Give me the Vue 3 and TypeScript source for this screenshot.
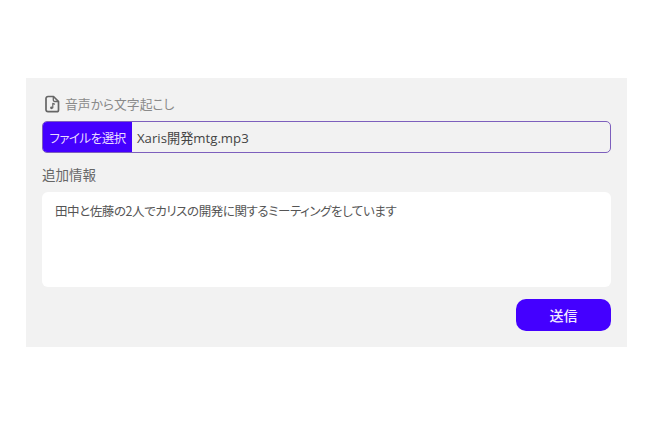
<script setup lang="ts">
const fileName: string = 'Xaris開発mtg.mp3'
const context: string = '田中と佐藤の2人でカリスの開発に関するミーティングをしています'
</script>

<template>
  <div class="page">
    <form class="panel" @submit.prevent>
      <div class="title">
        <svg class="icon" viewBox="0 0 16 18" width="16" height="18" fill="none" stroke="#666" stroke-width="1.700" stroke-linejoin="round" stroke-linecap="round">
          <path d="M4 1.500h5.500l5 5v8.500a1.700 1.700 0 0 1-1.700 1.700h-8.800a2 2 0 0 1-2-1.700v-11.500a2 2 0 0 1 2-2z" />
          <path d="M9.300 1.800v3.200a1.500 1.500 0 0 0 1.500 1.500h3.400" stroke-width="1.300" />
          <path d="M8.800 12.700v-4.300l1.700 .7" stroke-width="1.200" />
          <circle cx="7.500" cy="12.800" r="1.400" fill="#666" stroke="none" />
        </svg>
        <span>音声から文字起こし</span>
      </div>
      <div class="file">
        <span class="file-btn">ファイルを選択</span>
        <span class="file-name">{{ fileName }}</span>
      </div>
      <div class="label">追加情報</div>
      <div class="area">{{ context }}</div>
      <div class="actions">
        <button class="send" type="submit">送信</button>
      </div>
    </form>
  </div>
</template>

<style scoped>
.page {
  width: 650px;
  height: 438px;
  padding: 78px 23px 0 26px;
  box-sizing: border-box;
  font-family: "Noto Sans CJK JP", "Noto Sans", sans-serif;
  font-feature-settings: "palt";
  background: #fff;
}
.panel {
  height: 269px;
  padding: 16px;
  box-sizing: border-box;
  background: #f2f2f2;
  display: flex;
  flex-direction: column;
}
.title {
  height: 20px;
  margin-left: 2px;
  display: flex;
  align-items: center;
  gap: 5px;
  font-size: 12.800px;
  line-height: 20px;
  color: #8a8a8a;
}
.icon {
  flex: none;
}
.file {
  margin-top: 7px;
  height: 32px;
  box-sizing: border-box;
  display: flex;
  align-items: stretch;
  border: 1px solid #7d5fbd;
  border-radius: 5px;
  overflow: hidden;
}
.file-btn {
  width: 89px;
  flex: none;
  display: flex;
  align-items: center;
  justify-content: center;
  white-space: nowrap;
  background: #4400ff;
  color: #e9dcff;
  font-size: 12.500px;
  letter-spacing: -0.500px;
}
.file-name {
  padding-left: 5px;
  display: flex;
  align-items: center;
  font-family: "Open Sans", "Noto Sans CJK JP", sans-serif;
  font-size: 13.200px;
  color: #444;
}
.label {
  margin-top: 11px;
  height: 20px;
  line-height: 20px;
  font-size: 13.500px;
  color: #666;
}
.area {
  margin-top: 8px;
  height: 95px;
  padding: 10px 13px;
  box-sizing: border-box;
  background: #fff;
  border-radius: 6px;
  font-size: 12.500px;
  letter-spacing: -0.420px;
  line-height: 18px;
  color: #555;
}
.actions {
  margin-top: 12px;
  display: flex;
  justify-content: flex-end;
}
.send {
  width: 95px;
  height: 32px;
  border: none;
  border-radius: 10px;
  background: #4400ff;
  color: #f3ebff;
  font-family: inherit;
  font-feature-settings: inherit;
  font-size: 14px;
  font-weight: 500;
}
</style>
